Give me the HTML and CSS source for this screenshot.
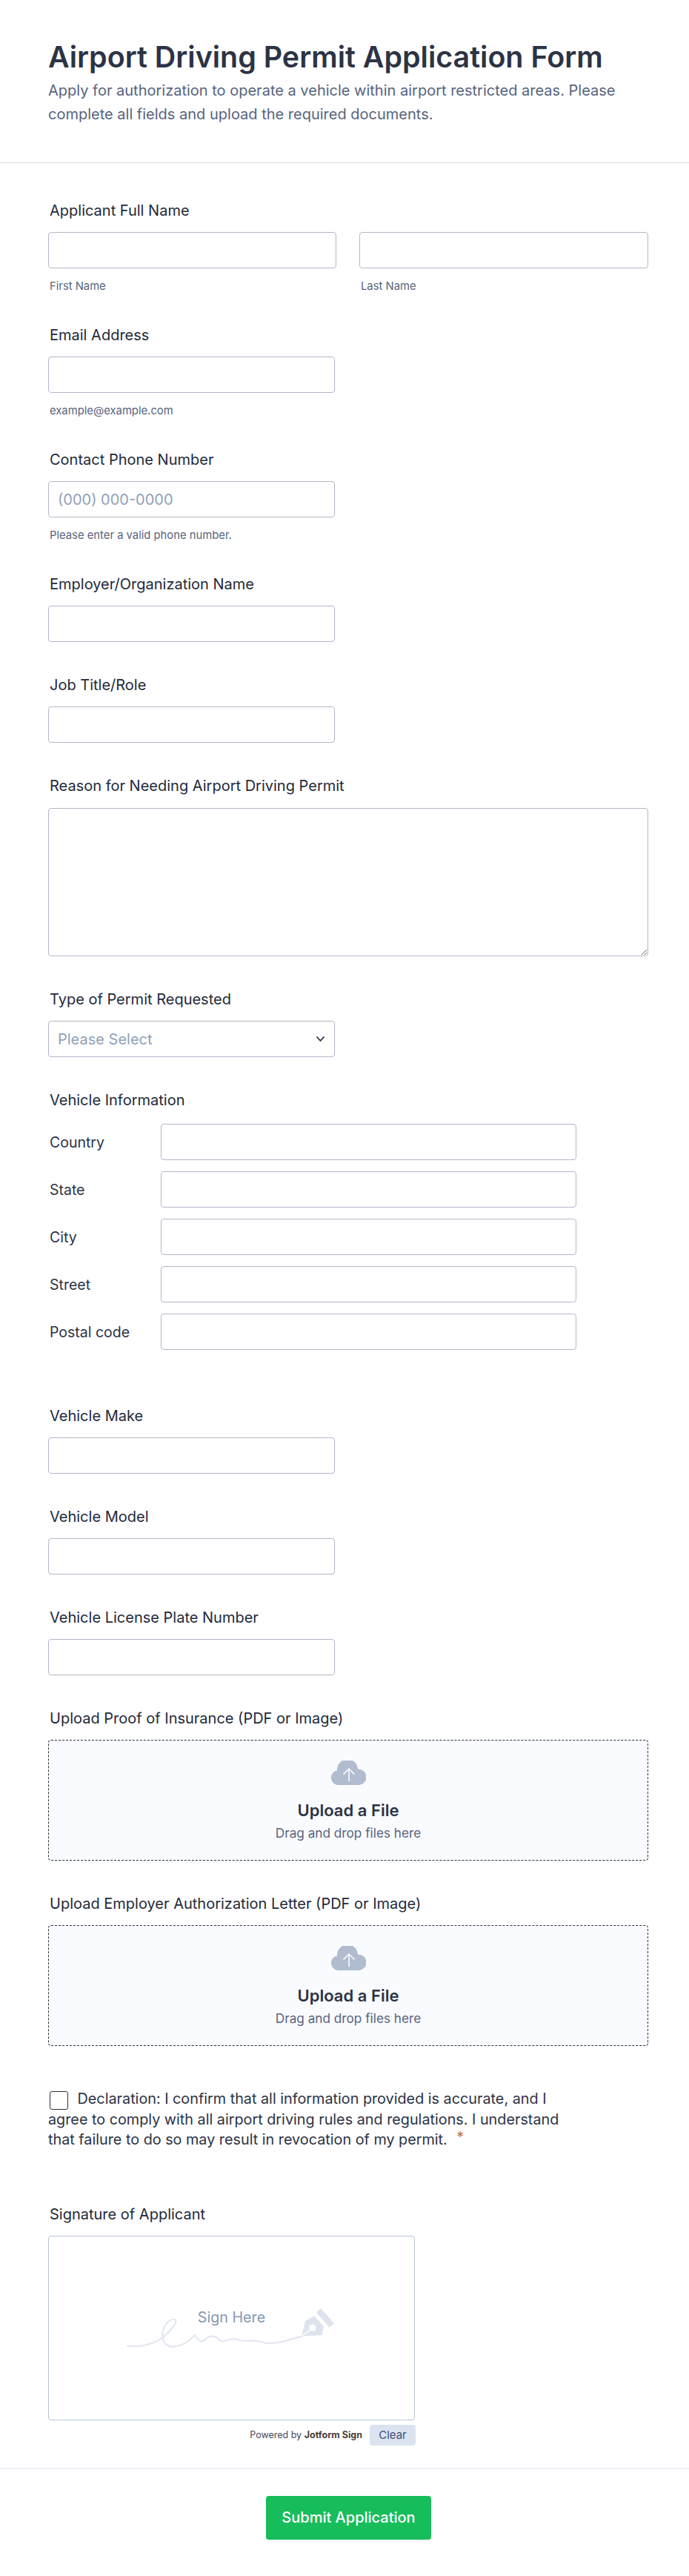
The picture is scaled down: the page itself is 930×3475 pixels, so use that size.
FILE: index.html
```html
<!DOCTYPE html>
<html lang="en">
<head>
    <meta charset="UTF-8">
    <meta name="viewport" content="width=device-width, initial-scale=1.0">
    <title>Airport Driving Permit Application Form</title>
    <link rel="stylesheet" href="styles.css">
</head>
<body>
    <header class="form-header">
        <h1>Airport Driving Permit Application Form</h1>
        <p>Apply for authorization to operate a vehicle within airport restricted areas. Please complete all fields and upload the required documents.</p>
    </header>
    <main class="form-body">
        <div class="field">
            <label class="field-label">Applicant Full Name</label>
            <div class="name-row">
                <div>
                    <input class="text-input full" type="text">
                    <div class="sublabel">First Name</div>
                </div>
                <div>
                    <input class="text-input full" type="text">
                    <div class="sublabel">Last Name</div>
                </div>
            </div>
        </div>
        <div class="field">
            <label class="field-label">Email Address</label>
            <input class="text-input" type="text">
            <div class="sublabel">example@example.com</div>
        </div>
        <div class="field">
            <label class="field-label">Contact Phone Number</label>
            <input class="text-input" type="text" placeholder="(000) 000-0000">
            <div class="sublabel">Please enter a valid phone number.</div>
        </div>
        <div class="field">
            <label class="field-label">Employer/Organization Name</label>
            <input class="text-input" type="text">
        </div>
        <div class="field">
            <label class="field-label">Job Title/Role</label>
            <input class="text-input" type="text">
        </div>
        <div class="field">
            <label class="field-label">Reason for Needing Airport Driving Permit</label>
            <textarea class="text-area"></textarea>
        </div>
        <div class="field">
            <label class="field-label">Type of Permit Requested</label>
            <div class="select-box">
                <span>Please Select</span>
                <svg width="13" height="9" viewBox="0 0 13 9"><path d="M1.5 1.5 6.5 7l5-5.5" fill="none" stroke="#2c3345" stroke-width="1.8"/></svg>
            </div>
        </div>
        <div class="field field-address">
            <label class="field-label">Vehicle Information</label>
            <div class="address-grid">
                <span>Country</span><input class="text-input full" type="text">
                <span>State</span><input class="text-input full" type="text">
                <span>City</span><input class="text-input full" type="text">
                <span>Street</span><input class="text-input full" type="text">
                <span>Postal code</span><input class="text-input full" type="text">
            </div>
        </div>
        <div class="field">
            <label class="field-label">Vehicle Make</label>
            <input class="text-input" type="text">
        </div>
        <div class="field">
            <label class="field-label">Vehicle Model</label>
            <input class="text-input" type="text">
        </div>
        <div class="field">
            <label class="field-label">Vehicle License Plate Number</label>
            <input class="text-input" type="text">
        </div>
        <div class="field">
            <label class="field-label">Upload Proof of Insurance (PDF or Image)</label>
            <div class="upload-box">
                <svg class="cloud" width="47" height="33" viewBox="0 0 47 33"><path d="M10 33a10 10 0 0 1-2-19.8A14 14 0 0 1 36 11.5a10 10 0 0 1 1.5 21.5z" fill="#b1bccf"/><path d="M24 28V11.5M16.5 18.5 24 11l7.5 7.5" fill="none" stroke="#fff" stroke-width="1.5"/></svg>
                <div class="upload-title">Upload a File</div>
                <div class="upload-hint">Drag and drop files here</div>
            </div>
        </div>
        <div class="field">
            <label class="field-label">Upload Employer Authorization Letter (PDF or Image)</label>
            <div class="upload-box">
                <svg class="cloud" width="47" height="33" viewBox="0 0 47 33"><path d="M10 33a10 10 0 0 1-2-19.8A14 14 0 0 1 36 11.5a10 10 0 0 1 1.5 21.5z" fill="#b1bccf"/><path d="M24 28V11.5M16.5 18.5 24 11l7.5 7.5" fill="none" stroke="#fff" stroke-width="1.5"/></svg>
                <div class="upload-title">Upload a File</div>
                <div class="upload-hint">Drag and drop files here</div>
            </div>
        </div>
        <div class="declaration">
            <input class="check" type="checkbox">
            Declaration: I confirm that all information provided is accurate, and I agree to comply with all airport driving rules and regulations. I understand that failure to do so may result in revocation of my permit. <span class="required">*</span>
        </div>
        <div class="signature">
            <label class="field-label">Signature of Applicant</label>
            <div class="sign-pad">
                <div class="sign-here">Sign Here</div>
                <svg class="scribble" width="280" height="56" viewBox="0 0 280 56">
                    <path d="M0 50.5C18 53 38 48 50 38 62 28 70 16 65 15 52 14 45 34 50 44 56 57 76 53 92 36 96 42 100 48 106 42 112 36 120 36 124 42 130 48 140 38 150 42 158 47 172 40 184 46 198 50 224 41 236 38" fill="none" stroke="#e0e5f0" stroke-width="2" stroke-linecap="round"/>
                    <path d="M236 37.5 241 17 253 10 266 24 264 36z" fill="#dfe3ee"/>
                    <circle cx="251" cy="26" r="4.5" fill="#fff"/>
                    <path d="M237 37 249 28" stroke="#fff" stroke-width="1.5"/>
                    <path d="M262 0 280 20 273.5 26 256 5.5z" fill="#dfe3ee"/>
                </svg>
            </div>
            <div class="sign-footer">
                <span class="powered">Powered by <b>Jotform Sign</b></span>
                <button class="clear-btn" type="button">Clear</button>
            </div>
        </div>
    </main>
    <footer class="form-footer">
        <button class="submit-btn" type="button">Submit Application</button>
    </footer>
</body>
</html>
```

FILE: styles.css
```css
* {
    box-sizing: border-box;
}
body {
    margin: 0;
    background-color: #fff;
    color: #2c3345;
    font-family: Inter, "Noto Sans", sans-serif;
}
.form-header {
    height: 220px;
    padding: 55px 40px 0 65px;
    border-bottom: 1px solid #d8dae6;
}
.form-header h1 {
    margin: 0;
    font-size: 39.4px;
    line-height: 45px;
    font-weight: 600;
}
.form-header p {
    margin: 6px 0 0;
    font-size: 20px;
    line-height: 32px;
    color: #57647e;
}
.form-body {
    padding: 54px 55px 0 65px;
}
.field {
    margin-bottom: 48px;
}
.field-label {
    display: block;
    margin-bottom: 19px;
    padding-left: 2px;
    font-size: 20px;
    line-height: 20px;
    font-weight: 400;
    color: #232a3b;
}
.text-input {
    display: block;
    width: 387px;
    height: 49px;
    padding: 0 12px;
    border: 1px solid #b3b8c8;
    border-radius: 4px;
    background: #fff;
    font: 20px Inter, sans-serif;
    color: #2c3345;
}
.text-input.full {
    width: 100%;
}
.text-input::placeholder {
    color: #8fa1b9;
}
.name-row {
    display: grid;
    grid-template-columns: 389px 390px;
    gap: 31px;
}
.sublabel {
    margin-top: 16px;
    padding-left: 2px;
    font-size: 14.8px;
    line-height: 16px;
    color: #57647e;
}
.text-area {
    display: block;
    width: 810px;
    height: 200px;
    margin-top: 20px;
    border: 1px solid #b3b8c8;
    border-radius: 4px;
}
.select-box {
    display: flex;
    align-items: center;
    justify-content: space-between;
    width: 387px;
    height: 49px;
    padding: 0 12px;
    border: 1px solid #b3b8c8;
    border-radius: 4px;
    font-size: 20px;
    color: #8fa1b9;
}
.field-address {
    margin-bottom: 79px;
}
.field-address .field-label {
    margin-bottom: 22px;
}
.address-grid {
    display: grid;
    grid-template-columns: 150px 561px;
    row-gap: 15px;
    align-items: center;
    padding-left: 2px;
    font-size: 19.5px;
    color: #2c3345;
}
.upload-box {
    display: flex;
    flex-direction: column;
    align-items: center;
    width: 810px;
    height: 163px;
    padding-top: 27px;
    border: 1px dashed #2c3345;
    border-radius: 4px;
    background-color: #f9fbfe;
}
.cloud {
    display: block;
}
.upload-title {
    margin-top: 22px;
    font-size: 22px;
    line-height: 24px;
    font-weight: 600;
}
.upload-hint {
    margin-top: 10px;
    font-size: 17.2px;
    line-height: 18px;
    color: #57647e;
}
.declaration {
    width: 715px;
    margin-top: 58px;
    font-size: 19.8px;
    line-height: 27.5px;
    color: #2c3345;
}
.check {
    appearance: none;
    width: 25px;
    height: 25px;
    margin: -6px 7px -6px 2px;
    border: 1.5px solid #2c3345;
    border-radius: 3px;
    background: #fff;
    vertical-align: -2px;
}
.required {
    margin-left: 7px;
    color: #c4763a;
    line-height: 0;
    vertical-align: 3px;
}
.signature {
    margin-top: 76px;
}
.sign-pad {
    display: flex;
    flex-direction: column;
    align-items: center;
    width: 495px;
    height: 249px;
    padding-top: 97px;
    border: 1px solid #b8c3d9;
    border-radius: 4px;
    position: relative;
}
.sign-here {
    font-size: 19.7px;
    line-height: 24px;
    color: #8797b3;
}
.scribble {
    position: absolute;
    left: 105px;
    top: 97px;
}
.sign-footer {
    display: flex;
    align-items: center;
    justify-content: flex-end;
    gap: 10px;
    width: 496px;
    margin-top: 6px;
}
.powered {
    font-size: 12.5px;
    color: #444b5c;
}
.powered b {
    color: #4a3f3c;
    font-weight: 700;
}
.clear-btn {
    width: 62px;
    height: 28px;
    padding: 0;
    border: none;
    border-radius: 4px;
    background-color: #dbe3f0;
    font: 15px Inter, sans-serif;
    color: #3a4f7a;
}
.form-footer {
    display: flex;
    justify-content: center;
    height: 147px;
    margin-top: 30px;
    padding: 37px 0 0 11px;
    border-top: 1px solid #e0e6f3;
}
.submit-btn {
    width: 223px;
    height: 59px;
    border: none;
    border-radius: 4px;
    background-color: #18bd5b;
    font: 500 20px Inter, sans-serif;
    color: #fff;
}
```
